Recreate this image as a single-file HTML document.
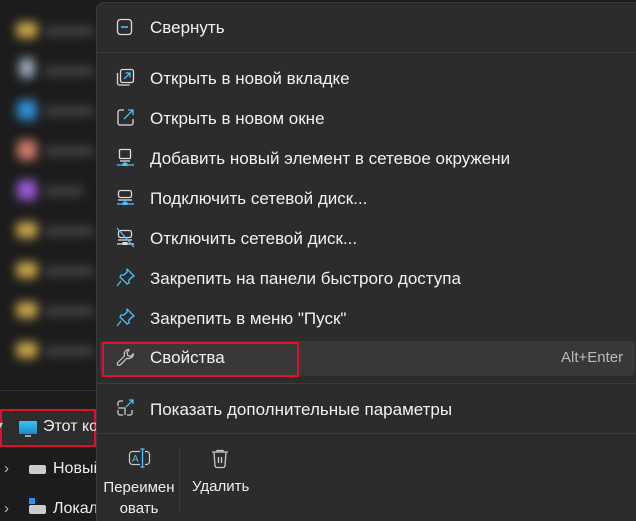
<!DOCTYPE html>
<html><head><meta charset="utf-8"><style>
*{margin:0;padding:0;box-sizing:border-box}
html,body{width:636px;height:521px;overflow:hidden}
body{background:#1c1c1c;font-family:"Segoe UI","Liberation Sans","DejaVu Sans",sans-serif;color:#fff;position:relative}
.blob{position:absolute;filter:blur(5px);border-radius:5px}
.menu{position:absolute;left:96px;top:2px;width:560px;height:519px;background:#2c2c2c;border:1px solid #3a3a3a;border-bottom:none;border-radius:8px 0 0 0}
.it{position:absolute;left:150px;font-size:17px;color:#f2f2f2;white-space:nowrap;line-height:20px}
.sep{position:absolute;left:97px;width:539px;height:1px;background:#3d3d3d}
.ic{position:absolute;left:115px}
</style></head><body>
<div class="blob" style="left:16px;top:22px;width:22px;height:16px;background:#c9a64a"></div><div class="blob" style="left:44px;top:26px;width:50px;height:10px;background:#444"></div>
<div class="blob" style="left:19px;top:58px;width:16px;height:20px;background:#9aa6b8"></div><div class="blob" style="left:44px;top:66px;width:50px;height:10px;background:#444"></div>
<div class="blob" style="left:17px;top:100px;width:20px;height:20px;background:#2f8fd6"></div><div class="blob" style="left:44px;top:106px;width:50px;height:10px;background:#444"></div>
<div class="blob" style="left:17px;top:140px;width:20px;height:20px;background:#d07a6a"></div><div class="blob" style="left:44px;top:146px;width:50px;height:10px;background:#444"></div>
<div class="blob" style="left:17px;top:180px;width:20px;height:20px;background:#9a5ad6"></div><div class="blob" style="left:44px;top:186px;width:40px;height:10px;background:#444"></div>
<div class="blob" style="left:16px;top:222px;width:22px;height:16px;background:#c9a64a"></div><div class="blob" style="left:44px;top:226px;width:50px;height:10px;background:#444"></div>
<div class="blob" style="left:16px;top:262px;width:22px;height:16px;background:#c9a64a"></div><div class="blob" style="left:44px;top:266px;width:50px;height:10px;background:#444"></div>
<div class="blob" style="left:16px;top:302px;width:22px;height:16px;background:#c9a64a"></div><div class="blob" style="left:44px;top:306px;width:50px;height:10px;background:#444"></div>
<div class="blob" style="left:16px;top:342px;width:22px;height:16px;background:#c9a64a"></div><div class="blob" style="left:44px;top:346px;width:50px;height:10px;background:#444"></div>
<div style="position:absolute;left:0;top:390px;width:96px;height:1px;background:#333"></div>
<div style="position:absolute;left:0;top:409px;width:96px;height:38px;background:#2d2d2d;border:2px solid #e0102a"></div>
<div style="position:absolute;left:-2px;top:420px;font-size:10px;color:#ccc">▾</div>
<div style="position:absolute;left:19px;top:421px;width:18px;height:13px;background:linear-gradient(#3bc3f0,#1a8ad0);border-radius:1px"></div>
<div style="position:absolute;left:25px;top:435px;width:6px;height:2px;background:#9ab"></div>
<div style="position:absolute;left:43px;top:418px;font-size:16px;color:#eee">Этот ко</div>
<div style="position:absolute;left:4px;top:460px;font-size:15px;color:#bbb">›</div>
<div style="position:absolute;left:29px;top:465px;width:17px;height:9px;background:#ccc;border-radius:2px"></div>
<div style="position:absolute;left:53px;top:460px;font-size:16px;color:#eee">Новый</div>
<div style="position:absolute;left:4px;top:500px;font-size:15px;color:#bbb">›</div>
<div style="position:absolute;left:29px;top:498px;width:6px;height:6px;background:#1e90ff"></div>
<div style="position:absolute;left:29px;top:505px;width:17px;height:9px;background:#ccc;border-radius:2px"></div>
<div style="position:absolute;left:53px;top:500px;font-size:16px;color:#eee">Локал</div>

<div class="menu"></div>
<div style="position:absolute;left:100px;top:341px;width:535px;height:35px;background:#383838;border-radius:4px"></div>
<div style="position:absolute;left:102px;top:342px;width:197px;height:35px;border:2px solid #e0102a"></div>

<div class="sep" style="top:52px"></div>
<div class="sep" style="top:383px"></div>
<div class="sep" style="top:433px"></div>

<svg class="ic" style="top:17px" width="22" height="22"><rect x="2.5" y="2.5" width="14" height="15" rx="3" fill="none" stroke="#ddd" stroke-width="1.3"/><line x1="6" y1="10" x2="13" y2="10" stroke="#4cc2ff" stroke-width="1.5"/></svg>
<div class="it" style="top:18px">Свернуть</div>

<svg class="ic" style="top:67px" width="22" height="22"><rect x="5.5" y="2.5" width="13" height="13" rx="2" fill="none" stroke="#ddd" stroke-width="1.3"/><path d="M2.5 6v10a2 2 0 0 0 2 2h10" fill="none" stroke="#ddd" stroke-width="1.3"/><path d="M9 12l6-6M10.5 6h4.5v4.5" fill="none" stroke="#4cc2ff" stroke-width="1.3"/></svg>
<div class="it" style="top:69px">Открыть в новой вкладке</div>

<svg class="ic" style="top:107px" width="22" height="22"><path d="M9 3H5a2 2 0 0 0-2 2v11a2 2 0 0 0 2 2h11a2 2 0 0 0 2-2v-4" fill="none" stroke="#ddd" stroke-width="1.3"/><path d="M9 12l9-9M13 3h5v5" fill="none" stroke="#4cc2ff" stroke-width="1.3"/></svg>
<div class="it" style="top:109px">Открыть в новом окне</div>

<svg class="ic" style="top:147px" width="22" height="22"><rect x="4.5" y="2.5" width="11" height="9" rx="1" fill="none" stroke="#ddd" stroke-width="1.3"/><path d="M5 14h10" stroke="#ddd" stroke-width="1.3"/><path d="M2 18h17M10 14v2" stroke="#4cc2ff" stroke-width="1.3"/><rect x="7.5" y="16" width="5" height="3" fill="#4cc2ff"/></svg>
<div class="it" style="top:149px">Добавить новый элемент в сетевое окружени</div>

<svg class="ic" style="top:187px" width="22" height="22"><rect x="3.5" y="3.5" width="13" height="7" rx="2" fill="none" stroke="#ddd" stroke-width="1.3"/><path d="M3 13h14" stroke="#ddd" stroke-width="1.3"/><path d="M2 17h17M10 13v2" stroke="#4cc2ff" stroke-width="1.3"/><rect x="7.5" y="15" width="5" height="3" fill="#4cc2ff"/></svg>
<div class="it" style="top:189px">Подключить сетевой диск...</div>

<svg class="ic" style="top:227px" width="22" height="22"><rect x="3.5" y="3.5" width="13" height="7" rx="2" fill="none" stroke="#ddd" stroke-width="1.3"/><path d="M3 13h14M2 17h17" stroke="#ddd" stroke-width="1.3"/><rect x="7.5" y="15" width="5" height="3" fill="#ddd"/><path d="M2 1l17 19" stroke="#4cc2ff" stroke-width="1.3"/></svg>
<div class="it" style="top:229px">Отключить сетевой диск...</div>

<svg class="ic" style="top:267px" width="22" height="22"><path d="M12 2l7 7-2 1-3 3 0 3-2 1-7-7 1-2 3 0 3-3z M6 14l-4 5" fill="none" stroke="#4cc2ff" stroke-width="1.3" stroke-linejoin="round"/></svg>
<div class="it" style="top:269px">Закрепить на панели быстрого доступа</div>

<svg class="ic" style="top:307px" width="22" height="22"><path d="M12 2l7 7-2 1-3 3 0 3-2 1-7-7 1-2 3 0 3-3z M6 14l-4 5" fill="none" stroke="#4cc2ff" stroke-width="1.3" stroke-linejoin="round"/></svg>
<div class="it" style="top:309px">Закрепить в меню "Пуск"</div>

<svg class="ic" style="top:347px" width="22" height="22"><path d="M14 2.5a5 5 0 0 0-4.6 6.5L2.8 15.5a1.7 1.7 0 0 0 2.4 2.4l6.6-6.6a5 5 0 0 0 6.6-4.6l-2.8 2.8-2.7-.8-.8-2.7z" fill="none" stroke="#ccc" stroke-width="1.2" stroke-linejoin="round"/></svg>
<div class="it" style="top:348px">Свойства</div>
<div style="position:absolute;left:561px;top:349px;font-size:15px;color:#bbb">Alt+Enter</div>

<svg class="ic" style="top:398px" width="22" height="22"><path d="M8 3H5a2 2 0 0 0-2 2v3M3 12v3a2 2 0 0 0 2 2h3M12 17h3a2 2 0 0 0 2-2v-3M3 10h7v7" fill="none" stroke="#ccc" stroke-width="1.3"/><path d="M11 9l7-7M14 2h4v4" fill="none" stroke="#4cc2ff" stroke-width="1.3"/></svg>
<div class="it" style="top:400px">Показать дополнительные параметры</div>

<svg style="position:absolute;left:128px;top:448px" width="24" height="20"><rect x="1.5" y="3.5" width="20" height="13" rx="3" fill="none" stroke="#ccc" stroke-width="1.2"/><rect x="12" y="1" width="5" height="18" fill="#2c2c2c"/><path d="M14.5 1v18M12.5 1h4M12.5 19h4" stroke="#4cc2ff" stroke-width="1.3"/><text x="4" y="14" font-size="10" fill="#4cc2ff" font-family="Liberation Sans">A</text></svg>
<div style="position:absolute;left:101px;top:477px;font-size:15px;color:#eee;text-align:center;width:76px;line-height:21px">Переимен<br>овать</div>
<div style="position:absolute;left:179px;top:448px;width:1px;height:62px;background:#3d3d3d"></div>
<svg style="position:absolute;left:210px;top:448px" width="20" height="22"><path d="M2 4h16M7 4V2.5h6V4M4 4l1 14a2 2 0 0 0 2 1.5h6a2 2 0 0 0 2-1.5L16 4M8.5 9v6M11.5 9v6" fill="none" stroke="#ccc" stroke-width="1.3"/></svg>
<div style="position:absolute;left:192px;top:478px;font-size:15px;color:#eee">Удалить</div>
</body></html>
